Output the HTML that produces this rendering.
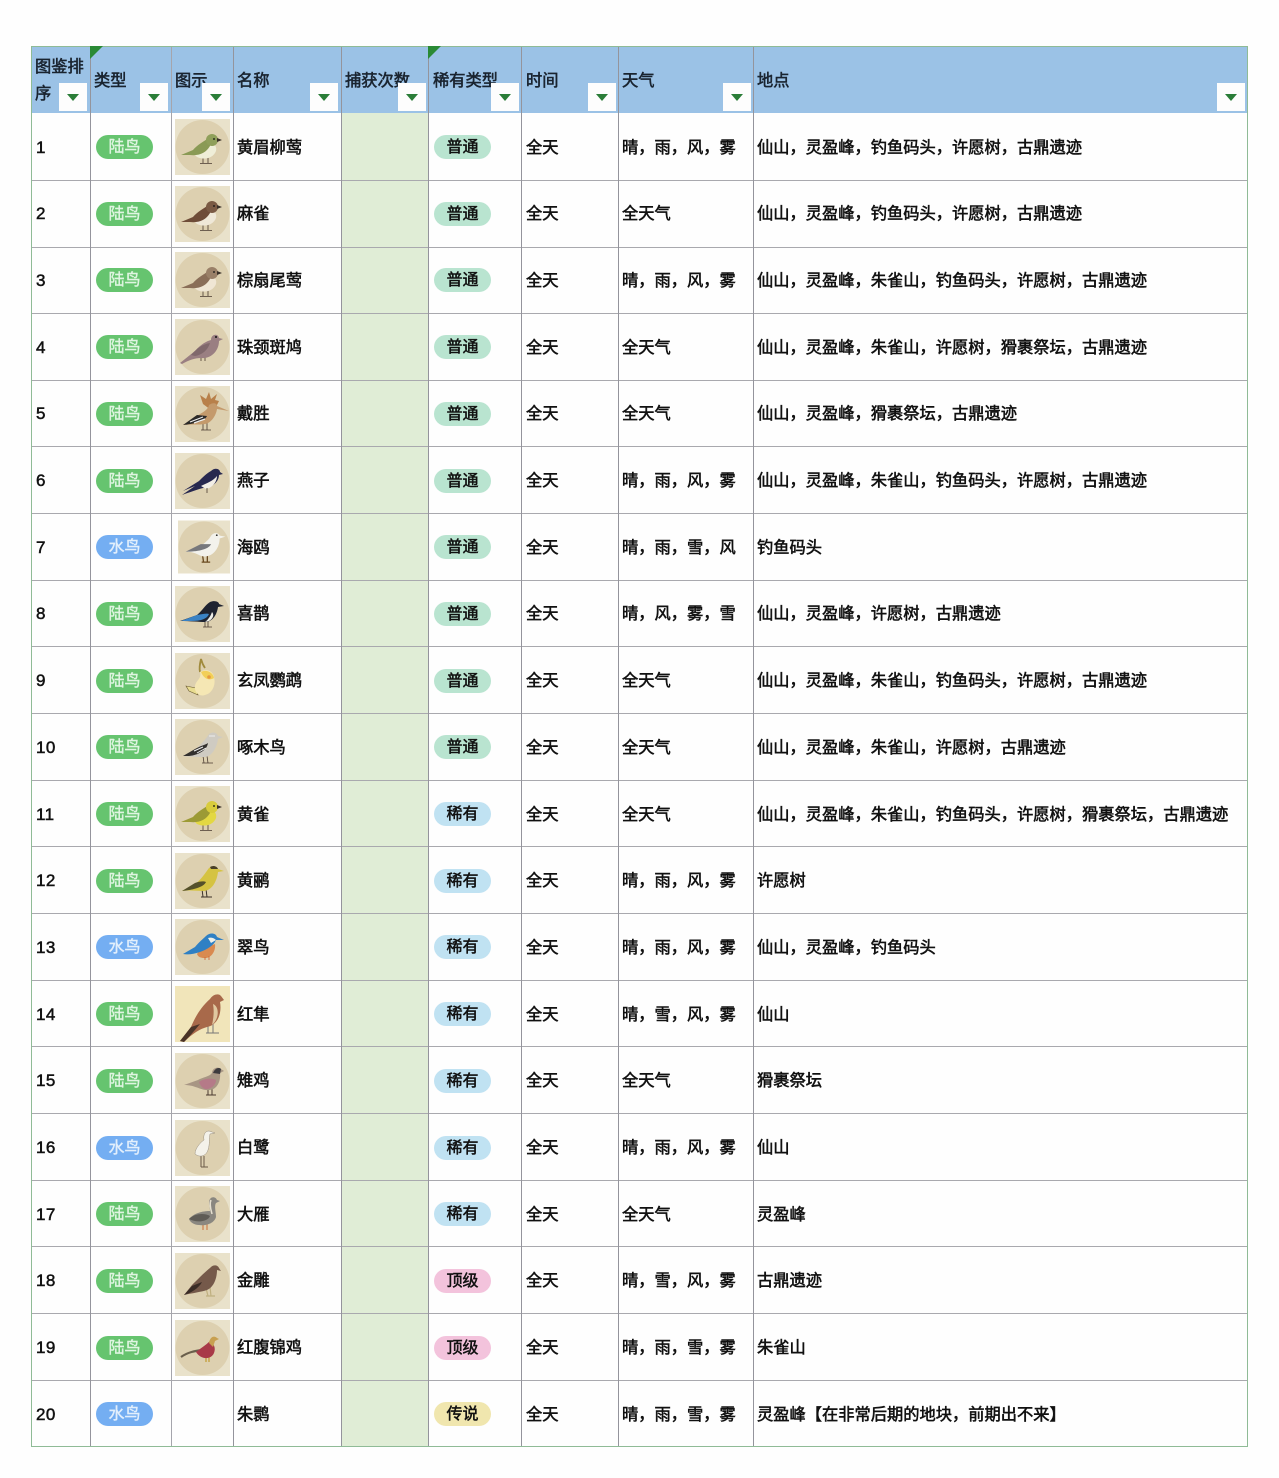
<!DOCTYPE html>
<html lang="zh"><head><meta charset="utf-8"><title>图鉴</title>
<style>
html,body{margin:0;padding:0;background:#fefefe}
body{width:1279px;height:1478px;position:relative;overflow:hidden;font-family:"Liberation Sans","Noto Sans CJK SC",sans-serif;color:#111}
#t{position:absolute;left:0;top:0;width:1279px;height:1478px;filter:blur(.3px)}
.hd{position:absolute;left:31px;top:46px;width:1217px;height:67px;background:#9bc2e6}
.cap{position:absolute;left:341px;top:113px;width:87px;height:1334px;background:#e0edd6}
.v{position:absolute;top:46px;height:1401px;width:1px;background:#94949c}
.h{position:absolute;left:31px;width:1217px;height:1px;background:#a9a9ae}
.g{background:#8fbb96}
.r{position:absolute;left:0;width:1279px;height:67px}
.t,.n{position:absolute;top:1.5px;line-height:67px;font-size:16.25px;white-space:nowrap;-webkit-text-stroke:.55px #111}
.n{left:36px;top:.5px;font-size:17px;letter-spacing:.4px;-webkit-text-stroke:.5px #111}
.nm{left:237px}.tm{left:526px}.w{left:622px}.lc{left:757px}
.p{position:absolute;top:22px;width:57px;height:24px;border-radius:12px;line-height:26px;text-align:center;font-size:16px;font-style:normal;white-space:nowrap}
.a{left:96px;color:#dff5e1;background:#66c46f;-webkit-text-stroke:.4px #dff5e1}
.wt{background:#74aef2;color:#e2effc;-webkit-text-stroke:.4px #e2effc}
.b{left:434px;-webkit-text-stroke:.5px #111}
.c1{background:#b9e4d0}.c2{background:#c0e2f2}.c3{background:#f3c3dc}.c4{background:#f0e6ae}
.im{position:absolute;left:175px;top:6px;width:56px;height:56px}
.ht{position:absolute;font-size:16.25px;line-height:20px;white-space:nowrap;-webkit-text-stroke:.55px #1a2430;color:#1a2430}
.f{position:absolute;top:83px;width:28px;height:28px;background:#fdfdfd}
.f:after{content:"";position:absolute;left:8px;top:11px;border-left:6px solid transparent;border-right:6px solid transparent;border-top:7px solid #2a7d38}
.k{position:absolute;top:46px;width:0;height:0;border-top:13px solid #2a8a35;border-right:13px solid transparent}
</style></head><body>
<svg width="0" height="0" style="position:absolute">
<defs>
<symbol id="bg" viewBox="0 0 56 56"><rect x="0" y="0" width="55" height="56" fill="#e9e2cb"/><circle cx="27.5" cy="28" r="27" fill="#ddd0b0"/></symbol>
<symbol id="sb" viewBox="0 0 56 56">
<path d="M28 38V44M33 37V44M25 44.5H37" stroke="#4a3a30" stroke-width=".8" fill="none"/>
<path d="M18 34C22 27 30 24 34 21C40 25 42 28 41 32C38 40 28 41 22 38Z" style="fill:var(--e)"/>
<path d="M6 36L18 31C22 26 28 23 35 18L35 27C31 34 24 37 15 36Z" style="fill:var(--b)"/>
<circle cx="37" cy="21" r="6" style="fill:var(--h)"/>
<path d="M42 19L47 21L42 23Z" fill="#3a3028"/><circle cx="39" cy="20" r=".9" fill="#111"/>
</symbol>
<symbol id="dove" viewBox="0 0 56 56">
<path d="M26 38V42M30 38V42" stroke="#4a3a30" stroke-width=".8"/>
<path d="M5 44L20 32C26 25 32 22 36 21C36 15 43 14 44 19L48 20L44 22C44 31 37 40 26 39C20 39 14 41 7 45Z" style="fill:var(--b)"/>
<path d="M16 36C22 29 28 25 35 24C33 31 27 36 20 37Z" style="fill:var(--h)"/>
<circle cx="41" cy="18" r="1" fill="#111"/>
</symbol>
</defs></svg>
<div id="t">
<div class="hd"></div><div class="cap"></div>
<div class="h" style="top:180px"></div><div class="h" style="top:247px"></div><div class="h" style="top:313px"></div><div class="h" style="top:380px"></div><div class="h" style="top:446px"></div><div class="h" style="top:513px"></div><div class="h" style="top:580px"></div><div class="h" style="top:646px"></div><div class="h" style="top:713px"></div><div class="h" style="top:780px"></div><div class="h" style="top:846px"></div><div class="h" style="top:913px"></div><div class="h" style="top:980px"></div><div class="h" style="top:1046px"></div><div class="h" style="top:1113px"></div><div class="h" style="top:1180px"></div><div class="h" style="top:1246px"></div><div class="h" style="top:1313px"></div><div class="h" style="top:1380px"></div>
<div class="v" style="left:90px"></div><div class="v" style="left:170.5px;width:1.5px;background:#a5a5ac"></div><div class="v" style="left:233px"></div><div class="v" style="left:340.5px"></div><div class="v" style="left:428px"></div><div class="v" style="left:521px"></div><div class="v" style="left:618px"></div><div class="v" style="left:753px"></div>
<div class="v g" style="left:31px"></div><div class="v g" style="left:1247px"></div>
<div class="h g" style="top:46px"></div><div class="h g" style="top:1446px"></div>

<span class="ht" style="left:35px;top:57px">图鉴排</span><span class="ht" style="left:35px;top:84px">序</span>
<span class="ht" style="left:94px;top:71px">类型</span><span class="ht" style="left:175px;top:71px">图示</span><span class="ht" style="left:237px;top:71px">名称</span><span class="ht" style="left:345px;top:71px">捕获次数</span><span class="ht" style="left:433px;top:71px">稀有类型</span><span class="ht" style="left:526px;top:71px">时间</span><span class="ht" style="left:622px;top:71px">天气</span><span class="ht" style="left:757px;top:71px">地点</span>
<div class="f" style="left:59px"></div><div class="f" style="left:140px"></div><div class="f" style="left:202px"></div><div class="f" style="left:310px"></div><div class="f" style="left:398px"></div><div class="f" style="left:491px"></div><div class="f" style="left:588px"></div><div class="f" style="left:723px"></div><div class="f" style="left:1217px"></div>
<div class="k" style="left:90px"></div><div class="k" style="left:428px"></div>

<div class="r" style="top:113px"><span class="n">1</span><i class="p a">陆鸟</i><svg class="im" viewBox="0 0 56 56"><use href="#bg"/><use href="#sb" style="--b:#8a9a55;--e:#efeed8;--h:#8f9f5a"/></svg><span class="t nm">黄眉柳莺</span><i class="p b c1">普通</i><span class="t tm">全天</span><span class="t w">晴，雨，风，雾</span><span class="t lc">仙山，灵盈峰，钓鱼码头，许愿树，古鼎遗迹</span></div>

<div class="r" style="top:179.7px"><span class="n">2</span><i class="p a">陆鸟</i><svg class="im" viewBox="0 0 56 56"><use href="#bg"/><use href="#sb" style="--b:#6e4c38;--e:#efe8d8;--h:#7a5a44"/></svg><span class="t nm">麻雀</span><i class="p b c1">普通</i><span class="t tm">全天</span><span class="t w">全天气</span><span class="t lc">仙山，灵盈峰，钓鱼码头，许愿树，古鼎遗迹</span></div>

<div class="r" style="top:246.4px"><span class="n">3</span><i class="p a">陆鸟</i><svg class="im" viewBox="0 0 56 56"><use href="#bg"/><use href="#sb" style="--b:#8a6e58;--e:#f0e6d4;--h:#9a8068"/></svg><span class="t nm">棕扇尾莺</span><i class="p b c1">普通</i><span class="t tm">全天</span><span class="t w">晴，雨，风，雾</span><span class="t lc">仙山，灵盈峰，朱雀山，钓鱼码头，许愿树，古鼎遗迹</span></div>

<div class="r" style="top:313.1px"><span class="n">4</span><i class="p a">陆鸟</i><svg class="im" viewBox="0 0 56 56"><use href="#bg"/><use href="#dove" style="--b:#9a7f82;--h:#80686c"/></svg><span class="t nm">珠颈斑鸠</span><i class="p b c1">普通</i><span class="t tm">全天</span><span class="t w">全天气</span><span class="t lc">仙山，灵盈峰，朱雀山，许愿树，猾裹祭坛，古鼎遗迹</span></div>

<div class="r" style="top:379.8px"><span class="n">5</span><i class="p a">陆鸟</i><svg class="im" viewBox="0 0 56 56"><use href="#bg"/><path d="M28 36V44M32 36V44M26 44H36" stroke="#4a3a30" stroke-width=".8" fill="none"/><path d="M28 18L25 9L31 13L34 6L36 13L42 8L40 14L44 15L41 21L36 24Z" fill="#b8804a"/><path d="M8 39L22 30C28 26 33 24 34 19C38 16 42 17 42 20L54 25L42 23C41 30 36 37 30 38C24 39 16 38 8 39Z" fill="#c49a6c"/><path d="M8 39L22 29L32 30C29 36 18 38 8 39Z" fill="#2c2a28"/><path d="M15 36L28 31M19 37L30 33" stroke="#eee" stroke-width="1.2"/></svg><span class="t nm">戴胜</span><i class="p b c1">普通</i><span class="t tm">全天</span><span class="t w">全天气</span><span class="t lc">仙山，灵盈峰，猾裹祭坛，古鼎遗迹</span></div>

<div class="r" style="top:446.5px"><span class="n">6</span><i class="p a">陆鸟</i><svg class="im" viewBox="0 0 56 56"><use href="#bg"/><path d="M7 42L20 33L8 38L24 28C28 24 32 20 36 18C40 14 45 16 45 19L48 21L44 22C44 28 38 34 32 34C27 35 18 38 7 42Z" fill="#27284f"/><path d="M26 33C32 30 38 28 42 23C42 29 37 35 31 36Z" fill="#f2eee6"/><path d="M32 35V40" stroke="#4a3a30" stroke-width=".8"/></svg><span class="t nm">燕子</span><i class="p b c1">普通</i><span class="t tm">全天</span><span class="t w">晴，雨，风，雾</span><span class="t lc">仙山，灵盈峰，朱雀山，钓鱼码头，许愿树，古鼎遗迹</span></div>

<div class="r" style="top:513.2px"><span class="n">7</span><i class="p wt a">水鸟</i><svg class="im" style="left:178px;width:53px" viewBox="0 0 56 56"><use href="#bg"/><path d="M26 37L27 44M31 37L31 44M25 44H34" stroke="#6a4a20" stroke-width="1.4" fill="none"/><path d="M8 33L24 27C28 24 33 20 35 16C38 12 43 13 44 16L50 17L44 19C44 28 38 38 28 38C22 38 20 33 8 33Z" fill="#f3f2ec"/><path d="M8 33L24 25L35 25C32 31 20 33 8 33Z" fill="#77787c"/><circle cx="41" cy="15.5" r=".9" fill="#111"/></svg><span class="t nm">海鸥</span><i class="p b c1">普通</i><span class="t tm">全天</span><span class="t w">晴，雨，雪，风</span><span class="t lc">钓鱼码头</span></div>

<div class="r" style="top:579.9px"><span class="n">8</span><i class="p a">陆鸟</i><svg class="im" viewBox="0 0 56 56"><use href="#bg"/><path d="M30 35V41M33 35V41M28 41H37" stroke="#4a3a30" stroke-width=".8" fill="none"/><path d="M5 35L22 29C28 24 30 19 35 16C40 14 44 16 44 18L49 20L43 21C42 28 38 36 30 36C24 36 15 35 5 35Z" fill="#1f2330"/><path d="M6 35L22 29C27 28 32 27 34 28C32 33 26 35 16 35Z" fill="#3a82c4"/><path d="M30 36C34 33 36 29 37 26C39 28 39 32 34 35Z" fill="#f0f0ea"/></svg><span class="t nm">喜鹊</span><i class="p b c1">普通</i><span class="t tm">全天</span><span class="t w">晴，风，雾，雪</span><span class="t lc">仙山，灵盈峰，许愿树，古鼎遗迹</span></div>

<div class="r" style="top:646.6px"><span class="n">9</span><i class="p a">陆鸟</i><svg class="im" viewBox="0 0 56 56"><use href="#bg"/><path d="M25 19C24 15 25 10 26 6C27 10 28 12 30 15" stroke="#a08a3c" stroke-width="1.8" fill="none"/><path d="M11 33L21 35L23 42L14 38Z" fill="#e8dc90" stroke="#6a5a30" stroke-width=".6"/><path d="M25 19C31 15 38 18 39 24C41 31 38 40 30 42C24 44 19 39 20 33C21 27 27 26 25 19Z" fill="#f5e7b4"/><path d="M26 19C31 16 38 19 39 25C34 28 29 26 26 19Z" fill="#f2cf58"/><circle cx="34" cy="24" r="1.8" fill="#e69a40"/></svg><span class="t nm">玄凤鹦鹉</span><i class="p b c1">普通</i><span class="t tm">全天</span><span class="t w">全天气</span><span class="t lc">仙山，灵盈峰，朱雀山，钓鱼码头，许愿树，古鼎遗迹</span></div>

<div class="r" style="top:713.3px"><span class="n">10</span><i class="p a">陆鸟</i><svg class="im" viewBox="0 0 56 56"><use href="#bg"/><path d="M28 37L29 44M32 37L33 44M27 44H38" stroke="#4a3a30" stroke-width=".8" fill="none"/><path d="M8 37L22 29C27 24 31 20 34 15C38 12 42 14 43 17L48 18L43 20C42 27 38 37 30 38C24 38 18 38 8 37Z" fill="#cfcbc2"/><path d="M8 37L20 30C25 27 30 26 33 24C32 31 24 36 14 37Z" fill="#33302e"/><path d="M19 32L28 28M22 34L31 29M34 17L40 17" stroke="#eee" stroke-width="1"/></svg><span class="t nm">啄木鸟</span><i class="p b c1">普通</i><span class="t tm">全天</span><span class="t w">全天气</span><span class="t lc">仙山，灵盈峰，朱雀山，许愿树，古鼎遗迹</span></div>

<div class="r" style="top:780px"><span class="n">11</span><i class="p a">陆鸟</i><svg class="im" viewBox="0 0 56 56"><use href="#bg"/><use href="#sb" style="--b:#9c9a35;--e:#e3d843;--h:#d9cc3c"/></svg><span class="t nm">黄雀</span><i class="p b c2">稀有</i><span class="t tm">全天</span><span class="t w">全天气</span><span class="t lc">仙山，灵盈峰，朱雀山，钓鱼码头，许愿树，猾裹祭坛，古鼎遗迹</span></div>

<div class="r" style="top:846.7px"><span class="n">12</span><i class="p a">陆鸟</i><svg class="im" viewBox="0 0 56 56"><use href="#bg"/><path d="M27 36L28 44M31 36L32 44M26 44H37" stroke="#3a3028" stroke-width="1" fill="none"/><path d="M7 38L20 31C26 27 31 19 34 15C38 12 42 13 43 16L49 18L43 19C42 27 38 37 29 38C23 38 16 37 7 38Z" fill="#d5c342"/><path d="M7 38L20 30C25 28 29 28 31 29C29 34 18 37 7 38Z" fill="#55512a"/><path d="M35 14C38 12 42 13 43 16L36 16Z" fill="#4a4028"/></svg><span class="t nm">黄鹂</span><i class="p b c2">稀有</i><span class="t tm">全天</span><span class="t w">晴，雨，风，雾</span><span class="t lc">许愿树</span></div>

<div class="r" style="top:913.4px"><span class="n">13</span><i class="p wt a">水鸟</i><svg class="im" viewBox="0 0 56 56"><use href="#bg"/><path d="M22 35C27 27 36 27 40 25C41 32 36 40 29 39C26 39 23 38 22 35Z" fill="#d98a50"/><path d="M8 35L20 28C24 23 28 20 31 17C35 13 41 14 42 18L49 21L41 21C39 26 33 30 25 33C19 35 13 36 8 35Z" fill="#2f80c4"/><path d="M33 19C36 18 39 19 41 21L36 24Z" fill="#eef0ea"/><path d="M30 38V41M34 37V41" stroke="#d06030" stroke-width=".8"/></svg><span class="t nm">翠鸟</span><i class="p b c2">稀有</i><span class="t tm">全天</span><span class="t w">晴，雨，风，雾</span><span class="t lc">仙山，灵盈峰，钓鱼码头</span></div>

<div class="r" style="top:980.1px"><span class="n">14</span><i class="p a">陆鸟</i><svg class="im" viewBox="0 0 56 56"><rect width="55" height="56" fill="#f1e5ba"/><path d="M33 38L33 47M38 37L38 47M31 47H44" stroke="#777" stroke-width="1" fill="none"/><path d="M5 55L16 41C20 31 26 21 35 13C38 8 44 7 46 10L49 14L45 16C47 27 43 39 32 41C25 43 18 47 9 56Z" fill="#a8694a"/><path d="M5 55L16 41L25 38C20 44 14 51 9 56Z" fill="#4a3428"/><path d="M38 18C44 20 45 32 37 39C39 30 39 24 38 18Z" fill="#e0c8a0"/></svg><span class="t nm">红隼</span><i class="p b c2">稀有</i><span class="t tm">全天</span><span class="t w">晴，雪，风，雾</span><span class="t lc">仙山</span></div>

<div class="r" style="top:1046.8px"><span class="n">15</span><i class="p a">陆鸟</i><svg class="im" viewBox="0 0 56 56"><use href="#bg"/><path d="M33 36V42M37 35V42M31 42H41" stroke="#4a3a30" stroke-width="1" fill="none"/><path d="M9 32L23 27C28 24 34 24 37 20C37 15 43 13 46 16L49 18L45 20C46 28 42 37 34 37C26 38 21 32 9 32Z" fill="#a89684"/><path d="M24 29C30 25 37 25 41 27C41 33 34 37 30 36C27 35 25 32 24 29Z" fill="#b57a88"/><path d="M38 20C40 15 44 14 46 16L45 21Z" fill="#3d3b3e"/></svg><span class="t nm">雉鸡</span><i class="p b c2">稀有</i><span class="t tm">全天</span><span class="t w">全天气</span><span class="t lc">猾裹祭坛</span></div>

<div class="r" style="top:1113.5px"><span class="n">16</span><i class="p wt a">水鸟</i><svg class="im" viewBox="0 0 56 56"><use href="#bg"/><path d="M26 36V47M29 36V47M26 47H33" stroke="#6a5a48" stroke-width="1" fill="none"/><path d="M20 34C20 28 26 22 29 20C28 15 30 11 34 11L40 13L35 14C34 18 35 24 33 30C31 36 25 38 20 34Z" fill="#f4f2ea" stroke="#9a9080" stroke-width=".5"/></svg><span class="t nm">白鹭</span><i class="p b c2">稀有</i><span class="t tm">全天</span><span class="t w">晴，雨，风，雾</span><span class="t lc">仙山</span></div>

<div class="r" style="top:1180.2px"><span class="n">17</span><i class="p a">陆鸟</i><svg class="im" viewBox="0 0 56 56"><use href="#bg"/><path d="M28 38V44M32 38V44" stroke="#d08a5a" stroke-width="1.4"/><path d="M14 33C20 26 30 25 35 25C35 20 33 16 35 13C37 10 41 11 42 14L45 15L41 17C39 20 41 26 41 31C39 38 30 40 24 39C19 39 15 36 14 33Z" fill="#8a8780"/><path d="M14 33C20 27 30 27 35 30C33 36 21 37 14 33Z" fill="#5f5c56"/><path d="M36 14C34 18 36 24 37 28" stroke="#e6e0d0" stroke-width="1.5" fill="none"/></svg><span class="t nm">大雁</span><i class="p b c2">稀有</i><span class="t tm">全天</span><span class="t w">全天气</span><span class="t lc">灵盈峰</span></div>

<div class="r" style="top:1246.9px"><span class="n">18</span><i class="p a">陆鸟</i><svg class="im" viewBox="0 0 56 56"><use href="#bg"/><path d="M31 35L33 43M35 34L36 43M31 43H40" stroke="#c0b080" stroke-width="1.2" fill="none"/><path d="M9 42L17 32C23 26 31 18 35 15C38 11 43 12 44 15L46 18L42 17C42 25 39 34 32 37C26 39 18 40 9 42Z" fill="#75594a"/><path d="M9 42L17 33L27 29C24 35 16 40 9 42Z" fill="#3a2c26"/></svg><span class="t nm">金雕</span><i class="p b c3">顶级</i><span class="t tm">全天</span><span class="t w">晴，雪，风，雾</span><span class="t lc">古鼎遗迹</span></div>

<div class="r" style="top:1313.6px"><span class="n">19</span><i class="p a">陆鸟</i><svg class="im" viewBox="0 0 56 56"><use href="#bg"/><path d="M31 37V42M34 37V42" stroke="#c09a30" stroke-width="1.2"/><path d="M6 37C13 32 20 31 27 30" stroke="#6a5f4c" stroke-width="2.2" fill="none"/><path d="M21 32C26 28 31 25 35 21C39 24 41 28 39 33C36 40 26 40 21 32Z" fill="#a83a48"/><path d="M34 23C35 17 39 15 42 18L44 19L40 21L38 27Z" fill="#c8a050"/></svg><span class="t nm">红腹锦鸡</span><i class="p b c3">顶级</i><span class="t tm">全天</span><span class="t w">晴，雨，雪，雾</span><span class="t lc">朱雀山</span></div>

<div class="r" style="top:1380.3px"><span class="n">20</span><i class="p wt a">水鸟</i><span class="t nm">朱鹮</span><i class="p b c4">传说</i><span class="t tm">全天</span><span class="t w">晴，雨，雪，雾</span><span class="t lc">灵盈峰【在非常后期的地块，前期出不来】</span></div>
</div>
</body></html>
